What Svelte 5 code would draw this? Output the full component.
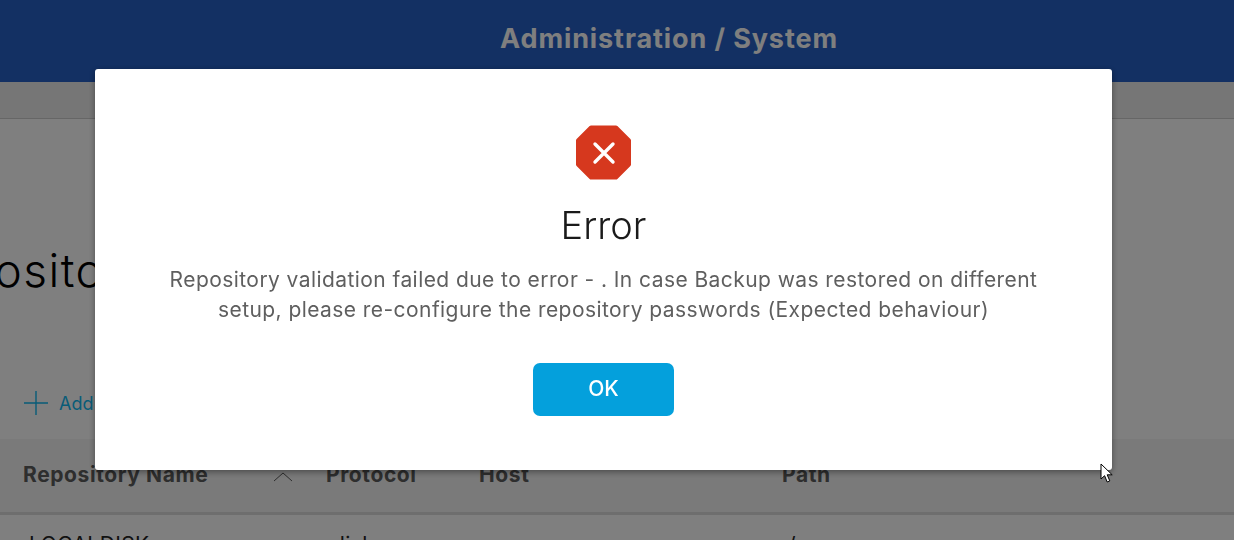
<script>
	const columns = [
		{ label: 'Repository Name', width: 303, sort: true },
		{ label: 'Protocol', width: 153 },
		{ label: 'Host', width: 303 },
		{ label: 'Path', width: 300 }
	];
	const row = ['LOCALDISK', 'disk', '', '/'];
</script>

<div class="page">
	<header class="topbar">
		<h1>Administration / System</h1>
	</header>
	<div class="subbar"></div>
	<main class="content">
		<h2>Repositories</h2>
		<button class="add">
			<svg width="26" height="26" viewBox="0 0 26 26"><path d="M13 1v24M1 13h24" stroke="currentColor" stroke-width="1.4" fill="none" /></svg>
			Add
		</button>
		<div class="table">
			<div class="thead">
				{#each columns as col}
					<div class="th" style="width: {col.width}px">
						{col.label}
						{#if col.sort}
							<svg class="sort" width="20" height="10" viewBox="0 0 20 10"><path d="M1 9l9-8 9 8" stroke="currentColor" stroke-width="1" fill="none" /></svg>
						{/if}
					</div>
				{/each}
			</div>
			<div class="trow">
				{#each columns as col, i}
					<div class="td" style="width: {col.width}px">{row[i]}</div>
				{/each}
			</div>
		</div>
	</main>
</div>

<div class="overlay">
	<div class="dialog">
		<svg class="icon" width="55" height="55" viewBox="0 0 55 55">
			<path d="M15 0.5h25a2 2 0 0 1 1.4.6l13 13a2 2 0 0 1 .6 1.4v24a2 2 0 0 1-.6 1.4l-13 13a2 2 0 0 1-1.4.6H15a2 2 0 0 1-1.4-.6l-13-13a2 2 0 0 1-.6-1.4v-24a2 2 0 0 1 .6-1.4l13-13a2 2 0 0 1 1.4-.6z" fill="#d6381e" />
			<path d="M19 19l18 18M37 19L19 37" stroke="#fff" stroke-width="3.4" stroke-linecap="round" fill="none" />
		</svg>
		<h3>Error</h3>
		<p>Repository validation failed due to error - . In case Backup was restored on different setup, please re-configure the repository passwords (Expected behaviour)</p>
		<button class="ok">OK</button>
	</div>
</div>

<svg class="cursor" width="14" height="21" viewBox="0 0 14 21">
	<path d="M1 1v15l3.6-3.3 2.6 6.3 2.6-1.1-2.6-6.1h5z" fill="#fff" stroke="#000" stroke-width="1" />
</svg>

<style>
	:global(body) {
		margin: 0;
		overflow: hidden;
		font-family: Inter, 'Noto Sans', sans-serif;
	}

	.page {
		width: 1234px;
		height: 540px;
		overflow: hidden;
		background: #fff;
	}

	.topbar {
		height: 82px;
		background: #2660c6;
		display: flex;
		justify-content: center;
		align-items: center;
		padding-left: 104px;
		box-sizing: border-box;
	}

	.topbar h1 {
		margin: 0 0 6px;
		font-size: 27px;
		font-weight: 700;
		letter-spacing: 0.9px;
		color: #fff;
	}

	.subbar {
		height: 37px;
		background: #ececec;
		border-bottom: 1px solid #ccc;
		box-sizing: border-box;
	}

	.content {
		padding-top: 121px;
	}

	h2 {
		margin: 0 0 0 -93px;
		font-size: 46px;
		font-weight: 300;
		letter-spacing: 1.5px;
		line-height: 60px;
		color: #000;
	}

	.add {
		display: flex;
		align-items: center;
		gap: 10px;
		margin: 90px 0 0 23px;
		padding: 0;
		border: 0;
		background: none;
		color: #10b8f0;
		font: 400 18px Inter, sans-serif;
	}

	.table {
		margin-top: 23px;
	}

	.thead {
		display: flex;
		height: 76px;
		align-items: center;
		padding-left: 23px;
		background: #f4f4f4;
		border-bottom: 3px solid #dcdcdc;
		box-sizing: border-box;
	}

	.th {
		position: relative;
		flex: none;
		margin-top: -2px;
		font-size: 21px;
		font-weight: 700;
		letter-spacing: 0.6px;
		color: #5c5c5c;
		box-sizing: border-box;
	}

	.sort {
		position: absolute;
		left: 250px;
		top: 10px;
	}

	.trow {
		display: flex;
		padding: 17px 0 0 23px;
		font-size: 21px;
		letter-spacing: 0.4px;
		color: #222;
	}

	.td {
		flex: none;
		padding-left: 6px;
		box-sizing: border-box;
	}

	.overlay {
		position: fixed;
		inset: 0;
		background: rgba(0, 0, 0, 0.5);
	}

	.dialog {
		position: absolute;
		left: 95px;
		top: 69px;
		width: 1017px;
		height: 401px;
		background: #fff;
		border-radius: 3px;
		box-shadow: 0 2px 6px rgba(0, 0, 0, 0.4);
		box-sizing: border-box;
		padding-top: 56px;
		display: flex;
		flex-direction: column;
		align-items: center;
	}

	.icon {
		display: block;
	}

	h3 {
		margin: 23px 0 0;
		font-size: 38px;
		font-weight: 300;
		line-height: 44px;
		color: #1a1a1a;
	}

	p {
		margin: 18px 0 0;
		width: 900px;
		text-align: center;
		font-size: 21px;
		font-weight: 400;
		letter-spacing: 0.43px;
		line-height: 30px;
		color: #5f5f5f;
	}

	.ok {
		margin-top: 38px;
		padding-bottom: 3px;
		width: 141px;
		height: 53px;
		border: 0;
		border-radius: 7px;
		background: #04a0dc;
		color: #fff;
		font: 500 21px Inter, sans-serif;
	}

	.cursor {
		position: fixed;
		left: 1100px;
		top: 463px;
	}
</style>
